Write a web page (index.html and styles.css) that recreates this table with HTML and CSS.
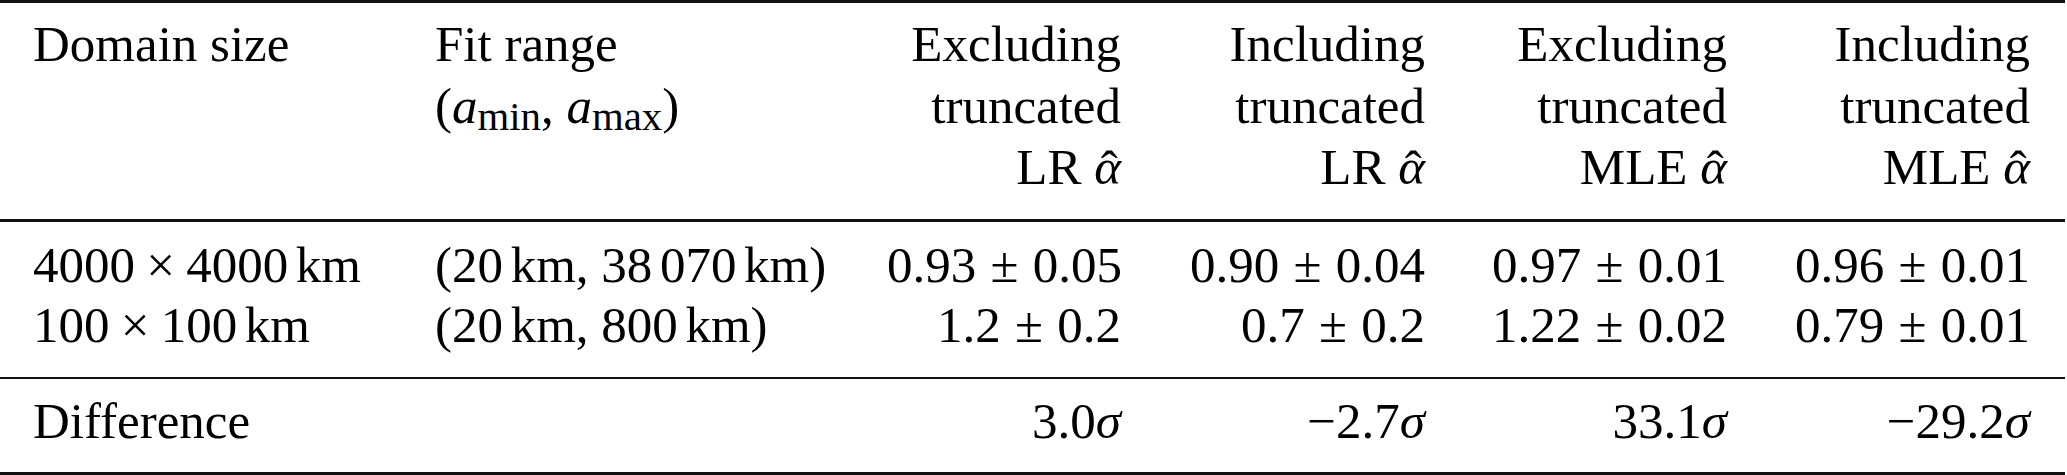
FILE: index.html
```html
<!DOCTYPE html>
<html lang="en">

<head>
    <meta charset="UTF-8">
    <meta name="viewport" content="width=device-width, initial-scale=1.0">
    <title>Fit results</title>
    <link rel="stylesheet" href="styles.css">
</head>

<body>
    <table class="results">
        <colgroup>
            <col class="c_domain">
            <col class="c_range">
            <col class="c_lr_ex">
            <col class="c_lr_in">
            <col class="c_mle_ex">
            <col class="c_mle_in">
        </colgroup>
        <thead>
            <tr>
                <th class="left">Domain size</th>
                <th class="left">Fit range<br>(<i>a</i><sub>min</sub>, <i>a</i><sub>max</sub>)</th>
                <th>Excluding<br>truncated<br>LR <span class="hat">α</span></th>
                <th>Including<br>truncated<br>LR <span class="hat">α</span></th>
                <th>Excluding<br>truncated<br>MLE <span class="hat">α</span></th>
                <th>Including<br>truncated<br>MLE <span class="hat">α</span></th>
            </tr>
        </thead>
        <tbody>
            <tr class="first">
                <td class="left">4000<span class="op">×</span>4000<span class="thin"></span>km</td>
                <td class="left">(20<span class="thin"></span>km, 38<span class="thin"></span>070<span class="thin"></span>km)</td>
                <td>0.93<span class="pm">±</span>0.05</td>
                <td>0.90<span class="pm">±</span>0.04</td>
                <td>0.97<span class="pm">±</span>0.01</td>
                <td>0.96<span class="pm">±</span>0.01</td>
            </tr>
            <tr class="last">
                <td class="left">100<span class="op">×</span>100<span class="thin"></span>km</td>
                <td class="left">(20<span class="thin"></span>km, 800<span class="thin"></span>km)</td>
                <td>1.2<span class="pm">±</span>0.2</td>
                <td>0.7<span class="pm">±</span>0.2</td>
                <td>1.22<span class="pm">±</span>0.02</td>
                <td>0.79<span class="pm">±</span>0.01</td>
            </tr>
        </tbody>
        <tfoot>
            <tr>
                <td class="left">Difference</td>
                <td class="left"></td>
                <td>3.0<i>σ</i></td>
                <td>−2.7<i>σ</i></td>
                <td>33.1<i>σ</i></td>
                <td>−29.2<i>σ</i></td>
            </tr>
        </tfoot>
    </table>
</body>

</html>
```

FILE: styles.css
```css
* {
    margin: 0;
    padding: 0;
    box-sizing: border-box;
}

body {
    background-color: #fff;
    color: #000;
    font-family: "Liberation Serif", "Times New Roman", serif;
}

.results {
    width: 2065px;
    table-layout: fixed;
    border-collapse: separate;
    border-spacing: 0;
    font-size: 51px;
}

.c_domain {
    width: 402px;
}

.c_range {
    width: 452px;
}

.c_lr_ex {
    width: 300px;
}

.c_lr_in {
    width: 304px;
}

.c_mle_ex {
    width: 302px;
}

.c_mle_in {
    width: 305px;
}

.results th,
.results td {
    font-weight: normal;
    text-align: right;
    vertical-align: top;
    white-space: nowrap;
    padding: 0 33px;
    line-height: 60px;
}

.results th:last-child,
.results td:last-child {
    padding-right: 35px;
}

.results .left {
    text-align: left;
}

/* header: top rule + mid rule */
.results th {
    line-height: 61.5px;
    padding-top: 11px;
    padding-bottom: 20px;
    border-top: 3px solid #111;
    border-bottom: 3px solid #111;
}

.results .first td {
    padding-top: 13px;
}

.results .last td {
    padding-bottom: 22px;
}

.results tfoot td {
    padding-top: 12px;
    padding-bottom: 21px;
    border-top: 2px solid #111;
    border-bottom: 3px solid #111;
}

.results sub {
    font-size: 0.8em;
    vertical-align: -0.16em;
    line-height: 0;
}

.op {
    margin: 0 0.22em;
}

.pm {
    margin: 0 0.28em;
}

.thin {
    margin-left: 0.15em;
}

.hat {
    position: relative;
    font-style: italic;
}

.hat::after {
    content: "ˆ";
    position: absolute;
    left: 0.06em;
    right: 0;
    top: 0;
    text-align: center;
    font-style: normal;
}
```
